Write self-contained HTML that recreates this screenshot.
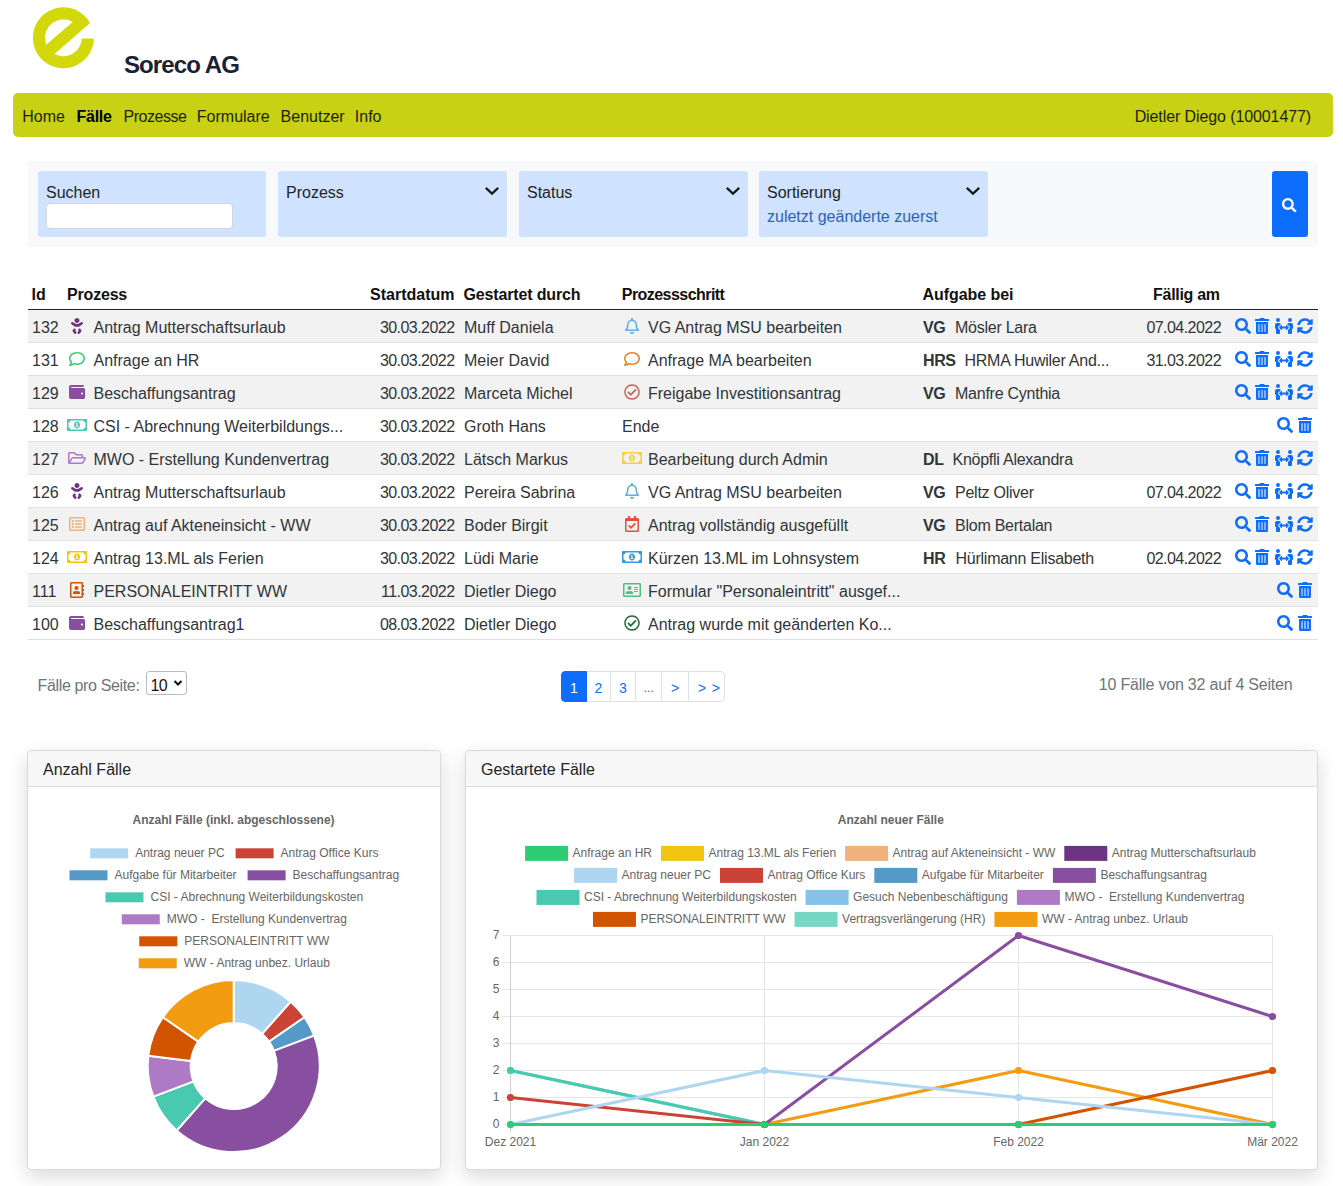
<!DOCTYPE html>
<html><head><meta charset="utf-8"><title>Fälle</title>
<style>
*{box-sizing:border-box;margin:0;padding:0}
html,body{width:1343px;height:1186px;overflow:hidden;background:#fff}
body{font-family:"Liberation Sans", sans-serif;font-size:16px;color:#212529;position:relative}
.a{position:absolute;white-space:nowrap}
.nav{left:13px;top:93px;width:1320px;height:44px;background:#c8d114;border-radius:5px}
.nl{position:absolute;top:2px;line-height:44px;font-size:16px;color:#1f1f00}
.filt{left:28px;top:161px;width:1290px;height:86px;background:#f8f9fa;border-radius:3px}
.fb{position:absolute;top:10px;height:66px;background:#cfe2ff;border-radius:3px}
.fl{position:absolute;left:8px;top:10px;line-height:24px;color:#212529}
.chev{position:absolute;top:14px;right:9px}
.th{font-weight:700;line-height:24px;color:#111}
.row{position:absolute;left:28px;width:1290px;height:33px;border-bottom:1px solid #dee2e6}
.row.s{background:#f2f2f2}
.c{position:absolute;top:6px;line-height:24px;white-space:nowrap;color:#30353a}
.ico{position:absolute}
.card{position:absolute;top:750px;height:420px;background:#fff;border:1px solid #dadada;border-radius:4px;box-shadow:0 7px 20px rgba(0,0,0,.15)}
.ch{height:36px;background:#f7f7f7;border-bottom:1px solid #dcdcdc;border-radius:4px 4px 0 0;line-height:37px;padding-left:15px;font-size:16px;color:#212529}
.pg{position:absolute;top:671px;height:31px;border:1px solid #dee2e6;line-height:32px;font-size:14px;color:#0d6efd;text-align:center;background:#fff}
</style></head><body>

<svg class="a" style="left:30px;top:4px" width="68" height="68" viewBox="0 0 68 68">
<path fill="#d3d80a" fill-rule="evenodd" d="M63.89 34.40A30.5 30.5 0 1 1 60.11 19.07L24.48 49.89A18.4 18.4 0 0 0 51.79 34.40Z M16.32 40.65A18.4 18.4 0 0 1 42.64 17.89Z"/>
</svg>
<div class="a" style="left:124px;top:49px;font-size:24px;font-weight:700;letter-spacing:-0.9px;line-height:32px;color:#1b2131">Soreco AG</div>
<div class="a nav">
<span class="nl" style="left:9.3px;">Home</span>
<span class="nl" style="left:63.599999999999994px;font-weight:700;color:#000;letter-spacing:-0.3px">Fälle</span>
<span class="nl" style="left:110.6px;letter-spacing:-0.5px">Prozesse</span>
<span class="nl" style="left:183.8px;">Formulare</span>
<span class="nl" style="left:267.6px;">Benutzer</span>
<span class="nl" style="left:341.8px;">Info</span>
<span class="nl" style="right:22px;letter-spacing:-0.1px">Dietler Diego (10001477)</span>
</div>
<div class="a filt">
<div class="fb" style="left:10px;width:228px"><div class="fl">Suchen</div><div style="position:absolute;left:8px;top:32px;width:187px;height:26px;background:#fff;border:1px solid #d3d6da;border-radius:4px"></div></div>
<div class="fb" style="left:250px;width:229px"><div class="fl">Prozess</div><div class="chev" style="top:14.6px;right:6.8px"><svg width="16" height="10" viewBox="0 0 16 10" style="display:block"><path d="M1.8 1.8 L8 7.6 L14.2 1.8" fill="none" stroke="#1a1d21" stroke-width="2.3"/></svg></div>
</div>
<div class="fb" style="left:491px;width:229px"><div class="fl">Status</div><div class="chev" style="top:14.6px;right:6.8px"><svg width="16" height="10" viewBox="0 0 16 10" style="display:block"><path d="M1.8 1.8 L8 7.6 L14.2 1.8" fill="none" stroke="#1a1d21" stroke-width="2.3"/></svg></div>
</div>
<div class="fb" style="left:731px;width:229px"><div class="fl">Sortierung</div><div class="chev" style="top:14.6px;right:6.8px"><svg width="16" height="10" viewBox="0 0 16 10" style="display:block"><path d="M1.8 1.8 L8 7.6 L14.2 1.8" fill="none" stroke="#1a1d21" stroke-width="2.3"/></svg></div>
<div class="fl" style="top:34px;color:#2d63b5">zuletzt geänderte zuerst</div>
</div>
<div class="fb" style="left:1244px;width:36px;background:#0d6efd"><div style="position:absolute;left:10.2px;top:26.5px"><svg width="14.50" height="14.5" viewBox="0 0 512 512" style="display:block"><path fill="#fff" d="M505 442.7L405.3 343c-4.5-4.5-10.6-7-17-7H372c27.6-35.3 44-79.7 44-128C416 93.1 322.9 0 208 0S0 93.1 0 208s93.1 208 208 208c48.3 0 92.7-16.4 128-44v16.3c0 6.4 2.5 12.5 7 17l99.7 99.7c9.4 9.4 24.6 9.4 33.9 0l28.3-28.3c9.4-9.4 9.4-24.6.1-34zM208 336c-70.7 0-128-57.2-128-128 0-70.7 57.2-128 128-128 70.7 0 128 57.2 128 128 0 70.7-57.2 128-128 128z"/></svg></div></div>
</div>
<div class="a th" style="left:31.5px;top:283px;letter-spacing:0px">Id</div>
<div class="a th" style="left:67.1px;top:283px;letter-spacing:-0.2px">Prozess</div>
<div class="a th" style="left:370.0px;top:283px;letter-spacing:0px">Startdatum</div>
<div class="a th" style="left:463.5px;top:283px;letter-spacing:-0.15px">Gestartet durch</div>
<div class="a th" style="left:621.8px;top:283px;letter-spacing:-0.55px">Prozessschritt</div>
<div class="a th" style="left:922.5px;top:283px;letter-spacing:-0.05px">Aufgabe bei</div>
<div class="a th" style="left:1153.1px;top:283px;letter-spacing:-0.3px">Fällig am</div>
<div class="a" style="left:28px;top:309px;width:1290px;height:1px;background:#212529"></div>
<div class="row s" style="top:310px">
<div class="c" style="left:4px">132</div>
<div class="ico" style="left:43.30px;top:8px"><svg width="12.00" height="16" viewBox="0 0 384 512" style="display:block"><path fill="#6c3483" d="M192 160c44.2 0 80-35.8 80-80S236.2 0 192 0s-80 35.8-80 80 35.8 80 80 80zm-53.4 248.8l25.6-32-61.5-51.2L56.8 383c-11.4 14.2-11.7 34.4-.8 49l48 64c7.9 10.5 19.9 16 32 16 8.3 0 16.8-2.6 24-8 17.7-13.2 21.2-38.3 8-56l-29.4-39.2zm142.7-83.2l-61.5 51.2 25.6 32L216 448c-13.2 17.700-9.7 42.8 8 56 7.2 5.4 15.6 8 24 8 12.2 0 24.2-5.5 32-16l48-64c10.9-14.6 10.6-34.8-.8-49l-45.9-57.4zM376.7 145c-12.7-18.1-37.6-22.4-55.700-9.8l-40.6 28.5c-52.7 37-124.2 37-176.8 0l-40.6-28.5C44.9 122.6 20 127 7.3 145c-12.7 18.1-8.3 43 9.8 55.7l40.6 28.5c15.6 10.9 32.4 19.3 49.7 25.3V264c0 8.8 7.2 16 16 16h137.2c8.8 0 16-7.2 16-16v-9.4c17.3-6 34.1-14.4 49.7-25.3l40.6-28.5c18.2-12.7 22.6-37.6 9.8-55.8z"/></svg></div>
<div class="c" style="left:65.5px">Antrag Mutterschaftsurlaub</div>
<div class="c" style="right:863.5px;letter-spacing:-0.55px">30.03.2022</div>
<div class="c" style="left:436px">Muff Daniela</div>
<div class="ico" style="left:597.20px;top:8px"><svg width="14.00" height="16" viewBox="0 0 448 512" style="display:block"><path fill="#5dade2" d="M439.39 362.29c-19.32-20.76-55.47-51.99-55.47-154.29 0-77.7-54.48-139.9-127.94-155.16V32c0-17.67-14.32-32-31.98-32s-31.98 14.33-31.98 32v20.84C118.56 68.1 64.08 130.3 64.08 208c0 102.3-36.15 133.53-55.47 154.29-6 6.45-8.66 14.16-8.61 21.71.11 16.4 12.98 32 32.1 32h383.8c19.12 0 32-15.6 32.1-32 .05-7.55-2.61-15.27-8.61-21.71zM67.53 368c21.22-27.97 44.42-74.33 44.53-159.42 0-.2-.06-.38-.06-.58 0-61.86 50.14-112 112-112s112 50.14 112 112c0 .2-.06.38-.06.58.11 85.1 23.31 131.46 44.530 159.42H67.53zM224 512c35.32 0 63.97-28.65 63.97-64H160.03c0 35.35 28.65 64 63.97 64z"/></svg></div>
<div class="c" style="left:620px">VG Antrag MSU bearbeiten</div>
<div class="c" style="left:895px;font-weight:700;letter-spacing:-0.4px">VG</div>
<div class="c" style="left:927px;letter-spacing:-0.25px">Mösler Lara</div>
<div class="c" style="right:97px;letter-spacing:-0.55px">07.04.2022</div>
<div class="ico" style="left:1206.5px;top:8px"><svg width="16.00" height="16" viewBox="0 0 512 512" style="display:block"><path fill="#0d6efd" d="M505 442.7L405.3 343c-4.5-4.5-10.6-7-17-7H372c27.6-35.3 44-79.7 44-128C416 93.1 322.9 0 208 0S0 93.1 0 208s93.1 208 208 208c48.3 0 92.7-16.4 128-44v16.3c0 6.4 2.5 12.5 7 17l99.7 99.7c9.4 9.4 24.6 9.4 33.9 0l28.3-28.3c9.4-9.4 9.4-24.6.1-34zM208 336c-70.7 0-128-57.2-128-128 0-70.7 57.2-128 128-128 70.7 0 128 57.2 128 128 0 70.7-57.2 128-128 128z"/></svg></div>
<div class="ico" style="left:1226.8px;top:8px"><svg width="14.00" height="16" viewBox="0 0 448 512" style="display:block"><path fill="#0d6efd" d="M32 464a48 48 0 0 0 48 48h288a48 48 0 0 0 48-48V128H32zm272-256a16 16 0 0 1 32 0v224a16 16 0 0 1-32 0zm-96 0a16 16 0 0 1 32 0v224a16 16 0 0 1-32 0zm-96 0a16 16 0 0 1 32 0v224a16 16 0 0 1-32 0zM432 32H312l-9.4-18.7A24 24 0 0 0 281.1 0H166.8a23.72 23.72 0 0 0-21.4 13.3L136 32H16A16 16 0 0 0 0 48v32a16 16 0 0 0 16 16h416a16 16 0 0 0 16-16V48a16 16 0 0 0-16-16z"/></svg></div>
<div class="ico" style="left:1247.2px;top:8px"><svg width="18.00" height="16" viewBox="0 0 576 512" style="display:block"><path fill="#0d6efd" d="M96,128A64,64,0,1,0,32,64,64,64,0,0,0,96,128Zm0,176.08a44.11,44.11,0,0,1,13.64-32L181.77,204c1.65-1.55,3.77-2.31,5.61-3.57A63.91,63.91,0,0,0,128,160H64A64,64,0,0,0,0,224v96a32,32,0,0,0,32,32V480a32,32,0,0,0,32,32h64a32,32,0,0,0,32-32V383.61l-50.36-47.53A44.08,44.08,0,0,1,96,304.08ZM480,128a64,64,0,1,0-64-64A64,64,0,0,0,480,128Zm32,32H448a63.91,63.91,0,0,0-59.38,40.42c1.84,1.27,4,2,5.62,3.59l72.12,68.06a44.37,44.37,0,0,1,0,64L416,383.62V480a32,32,0,0,0,32,32h64a32,32,0,0,0,32-32V352a32,32,0,0,0,32-32V224A64,64,0,0,0,512,160ZM444.4,295.34l-72.12-68.06A12,12,0,0,0,352,236v36H224V236a12,12,0,0,0-20.28-8.73L131.6,295.34a12.4,12.4,0,0,0,0,17.47l72.12,68.07A12,12,0,0,0,224,372V336H352v36a12,12,0,0,0,20.28,8.72l72.12-68.07A12.4,12.4,0,0,0,444.4,295.34Z"/></svg></div>
<div class="ico" style="left:1269px;top:8px"><svg width="16.00" height="16" viewBox="0 0 512 512" style="display:block"><path fill="#0d6efd" d="M370.72 133.28C339.458 104.008 298.888 87.962 255.848 88c-77.458.068-144.328 53.178-162.791 126.85-1.344 5.363-6.122 9.15-11.651 9.15H24.103c-7.498 0-13.194-6.807-11.807-14.176C33.933 94.924 134.813 8 256 8c66.448 0 126.791 26.136 171.315 68.685L463.03 40.97C478.149 25.851 504 36.559 504 57.941V192c0 13.255-10.745 24-24 24H345.941c-21.382 0-32.090-25.851-16.971-40.971l41.75-41.749zM32 296h134.059c21.382 0 32.09 25.851 16.971 40.971l-41.75 41.75c31.262 29.273 71.835 45.319 114.876 45.28 77.418-.07 144.315-53.144 162.787-126.849 1.344-5.363 6.122-9.15 11.651-9.150h57.304c7.498 0 13.194 6.807 11.807 14.176C478.067 417.076 377.187 504 256 504c-66.448 0-126.791-26.136-171.315-68.685L48.97 471.03C33.851 486.149 8 475.441 8 454.059V320c0-13.255 10.745-24 24-24z"/></svg></div>
</div>
<div class="row" style="top:343px">
<div class="c" style="left:4px">131</div>
<div class="ico" style="left:41.30px;top:8px"><svg width="16.00" height="16" viewBox="0 0 512 512" style="display:block"><path fill="#2ecc71" d="M256 32C114.6 32 0 125.1 0 240c0 47.6 19.9 91.2 52.9 126.3C38 405.7 7 439.1 6.5 439.5c-6.6 7-8.4 17.2-4.6 26S14.4 480 24 480c61.5 0 110-25.7 139.1-46.3C192 442.8 223.2 448 256 448c141.4 0 256-93.1 256-208S397.4 32 256 32zm0 368c-26.7 0-53.1-4.1-78.4-12.1l-22.7-7.2-19.5 13.8c-14.3 10.1-33.9 21.4-57.5 29 7.3-12.1 14.4-25.7 19.9-40.2l10.6-28.1-20.6-21.8C69.7 314.1 48 282.2 48 240c0-88.2 93.3-160 208-160s208 71.8 208 160-93.3 160-208 160z"/></svg></div>
<div class="c" style="left:65.5px">Anfrage an HR</div>
<div class="c" style="right:863.5px;letter-spacing:-0.55px">30.03.2022</div>
<div class="c" style="left:436px">Meier David</div>
<div class="ico" style="left:596.20px;top:8px"><svg width="16.00" height="16" viewBox="0 0 512 512" style="display:block"><path fill="#e67e22" d="M256 32C114.6 32 0 125.1 0 240c0 47.6 19.9 91.2 52.9 126.3C38 405.7 7 439.1 6.5 439.5c-6.6 7-8.4 17.2-4.6 26S14.4 480 24 480c61.5 0 110-25.7 139.1-46.3C192 442.8 223.2 448 256 448c141.4 0 256-93.1 256-208S397.4 32 256 32zm0 368c-26.7 0-53.1-4.1-78.4-12.1l-22.7-7.2-19.5 13.8c-14.3 10.1-33.9 21.4-57.5 29 7.3-12.1 14.4-25.7 19.9-40.2l10.6-28.1-20.6-21.8C69.7 314.1 48 282.2 48 240c0-88.2 93.3-160 208-160s208 71.8 208 160-93.3 160-208 160z"/></svg></div>
<div class="c" style="left:620px">Anfrage MA bearbeiten</div>
<div class="c" style="left:895px;font-weight:700;letter-spacing:-0.4px">HRS</div>
<div class="c" style="left:936.5px;letter-spacing:-0.25px">HRMA Huwiler And...</div>
<div class="c" style="right:97px;letter-spacing:-0.55px">31.03.2022</div>
<div class="ico" style="left:1206.5px;top:8px"><svg width="16.00" height="16" viewBox="0 0 512 512" style="display:block"><path fill="#0d6efd" d="M505 442.7L405.3 343c-4.5-4.5-10.6-7-17-7H372c27.6-35.3 44-79.7 44-128C416 93.1 322.9 0 208 0S0 93.1 0 208s93.1 208 208 208c48.3 0 92.7-16.4 128-44v16.3c0 6.4 2.5 12.5 7 17l99.7 99.7c9.4 9.4 24.6 9.4 33.9 0l28.3-28.3c9.4-9.4 9.4-24.6.1-34zM208 336c-70.7 0-128-57.2-128-128 0-70.7 57.2-128 128-128 70.7 0 128 57.2 128 128 0 70.7-57.2 128-128 128z"/></svg></div>
<div class="ico" style="left:1226.8px;top:8px"><svg width="14.00" height="16" viewBox="0 0 448 512" style="display:block"><path fill="#0d6efd" d="M32 464a48 48 0 0 0 48 48h288a48 48 0 0 0 48-48V128H32zm272-256a16 16 0 0 1 32 0v224a16 16 0 0 1-32 0zm-96 0a16 16 0 0 1 32 0v224a16 16 0 0 1-32 0zm-96 0a16 16 0 0 1 32 0v224a16 16 0 0 1-32 0zM432 32H312l-9.4-18.7A24 24 0 0 0 281.1 0H166.8a23.72 23.72 0 0 0-21.4 13.3L136 32H16A16 16 0 0 0 0 48v32a16 16 0 0 0 16 16h416a16 16 0 0 0 16-16V48a16 16 0 0 0-16-16z"/></svg></div>
<div class="ico" style="left:1247.2px;top:8px"><svg width="18.00" height="16" viewBox="0 0 576 512" style="display:block"><path fill="#0d6efd" d="M96,128A64,64,0,1,0,32,64,64,64,0,0,0,96,128Zm0,176.08a44.11,44.11,0,0,1,13.64-32L181.77,204c1.65-1.55,3.77-2.31,5.61-3.57A63.91,63.91,0,0,0,128,160H64A64,64,0,0,0,0,224v96a32,32,0,0,0,32,32V480a32,32,0,0,0,32,32h64a32,32,0,0,0,32-32V383.61l-50.36-47.53A44.08,44.08,0,0,1,96,304.08ZM480,128a64,64,0,1,0-64-64A64,64,0,0,0,480,128Zm32,32H448a63.91,63.91,0,0,0-59.38,40.42c1.84,1.27,4,2,5.62,3.59l72.12,68.06a44.37,44.37,0,0,1,0,64L416,383.62V480a32,32,0,0,0,32,32h64a32,32,0,0,0,32-32V352a32,32,0,0,0,32-32V224A64,64,0,0,0,512,160ZM444.4,295.34l-72.12-68.06A12,12,0,0,0,352,236v36H224V236a12,12,0,0,0-20.28-8.73L131.6,295.34a12.4,12.4,0,0,0,0,17.47l72.12,68.07A12,12,0,0,0,224,372V336H352v36a12,12,0,0,0,20.28,8.72l72.12-68.07A12.4,12.4,0,0,0,444.4,295.34Z"/></svg></div>
<div class="ico" style="left:1269px;top:8px"><svg width="16.00" height="16" viewBox="0 0 512 512" style="display:block"><path fill="#0d6efd" d="M370.72 133.28C339.458 104.008 298.888 87.962 255.848 88c-77.458.068-144.328 53.178-162.791 126.85-1.344 5.363-6.122 9.15-11.651 9.15H24.103c-7.498 0-13.194-6.807-11.807-14.176C33.933 94.924 134.813 8 256 8c66.448 0 126.791 26.136 171.315 68.685L463.03 40.97C478.149 25.851 504 36.559 504 57.941V192c0 13.255-10.745 24-24 24H345.941c-21.382 0-32.090-25.851-16.971-40.971l41.75-41.749zM32 296h134.059c21.382 0 32.09 25.851 16.971 40.971l-41.75 41.75c31.262 29.273 71.835 45.319 114.876 45.28 77.418-.07 144.315-53.144 162.787-126.849 1.344-5.363 6.122-9.15 11.651-9.150h57.304c7.498 0 13.194 6.807 11.807 14.176C478.067 417.076 377.187 504 256 504c-66.448 0-126.791-26.136-171.315-68.685L48.97 471.03C33.851 486.149 8 475.441 8 454.059V320c0-13.255 10.745-24 24-24z"/></svg></div>
</div>
<div class="row s" style="top:376px">
<div class="c" style="left:4px">129</div>
<div class="ico" style="left:41.30px;top:8px"><svg width="16.00" height="16" viewBox="0 0 512 512" style="display:block"><path fill="#884ea0" d="M461.2 128H80c-8.84 0-16-7.16-16-16s7.16-16 16-16h384c8.84 0 16-7.16 16-16 0-26.51-21.49-48-48-48H64C28.65 32 0 60.65 0 96v320c0 35.35 28.65 64 64 64h397.2c28.020 0 50.8-21.53 50.8-48V176c0-26.47-22.78-48-50.8-48zM416 336c-17.67 0-32-14.33-32-32s14.33-32 32-32 32 14.33 32 32-14.33 32-32 32z"/></svg></div>
<div class="c" style="left:65.5px">Beschaffungsantrag</div>
<div class="c" style="right:863.5px;letter-spacing:-0.55px">30.03.2022</div>
<div class="c" style="left:436px">Marceta Michel</div>
<div class="ico" style="left:596.20px;top:8px"><svg width="16.00" height="16" viewBox="0 0 512 512" style="display:block"><path fill="#cd6155" d="M256 8C119.033 8 8 119.033 8 256s111.033 248 248 248 248-111.033 248-248S392.967 8 256 8zm0 48c110.532 0 200 89.451 200 200 0 110.532-89.451 200-200 200-110.532 0-200-89.451-200-200 0-110.532 89.451-200 200-200m140.204 130.267l-22.536-22.718c-4.667-4.705-12.265-4.736-16.970-.068L215.346 303.697l-59.792-60.277c-4.667-4.705-12.265-4.736-16.97-.069l-22.719 22.536c-4.705 4.667-4.736 12.265-.068 16.971l90.781 91.516c4.667 4.705 12.265 4.736 16.97.068l172.589-171.204c4.704-4.668 4.734-12.266.067-16.971z"/></svg></div>
<div class="c" style="left:620px">Freigabe Investitionsantrag</div>
<div class="c" style="left:895px;font-weight:700;letter-spacing:-0.4px">VG</div>
<div class="c" style="left:927px;letter-spacing:-0.25px">Manfre Cynthia</div>
<div class="ico" style="left:1206.5px;top:8px"><svg width="16.00" height="16" viewBox="0 0 512 512" style="display:block"><path fill="#0d6efd" d="M505 442.7L405.3 343c-4.5-4.5-10.6-7-17-7H372c27.6-35.3 44-79.7 44-128C416 93.1 322.9 0 208 0S0 93.1 0 208s93.1 208 208 208c48.3 0 92.7-16.4 128-44v16.3c0 6.4 2.5 12.5 7 17l99.7 99.7c9.4 9.4 24.6 9.4 33.9 0l28.3-28.3c9.4-9.4 9.4-24.6.1-34zM208 336c-70.7 0-128-57.2-128-128 0-70.7 57.2-128 128-128 70.7 0 128 57.2 128 128 0 70.7-57.2 128-128 128z"/></svg></div>
<div class="ico" style="left:1226.8px;top:8px"><svg width="14.00" height="16" viewBox="0 0 448 512" style="display:block"><path fill="#0d6efd" d="M32 464a48 48 0 0 0 48 48h288a48 48 0 0 0 48-48V128H32zm272-256a16 16 0 0 1 32 0v224a16 16 0 0 1-32 0zm-96 0a16 16 0 0 1 32 0v224a16 16 0 0 1-32 0zm-96 0a16 16 0 0 1 32 0v224a16 16 0 0 1-32 0zM432 32H312l-9.4-18.7A24 24 0 0 0 281.1 0H166.8a23.72 23.72 0 0 0-21.4 13.3L136 32H16A16 16 0 0 0 0 48v32a16 16 0 0 0 16 16h416a16 16 0 0 0 16-16V48a16 16 0 0 0-16-16z"/></svg></div>
<div class="ico" style="left:1247.2px;top:8px"><svg width="18.00" height="16" viewBox="0 0 576 512" style="display:block"><path fill="#0d6efd" d="M96,128A64,64,0,1,0,32,64,64,64,0,0,0,96,128Zm0,176.08a44.11,44.11,0,0,1,13.64-32L181.77,204c1.65-1.55,3.77-2.31,5.61-3.57A63.91,63.91,0,0,0,128,160H64A64,64,0,0,0,0,224v96a32,32,0,0,0,32,32V480a32,32,0,0,0,32,32h64a32,32,0,0,0,32-32V383.61l-50.36-47.53A44.08,44.08,0,0,1,96,304.08ZM480,128a64,64,0,1,0-64-64A64,64,0,0,0,480,128Zm32,32H448a63.91,63.91,0,0,0-59.38,40.42c1.84,1.27,4,2,5.62,3.59l72.12,68.06a44.37,44.37,0,0,1,0,64L416,383.62V480a32,32,0,0,0,32,32h64a32,32,0,0,0,32-32V352a32,32,0,0,0,32-32V224A64,64,0,0,0,512,160ZM444.4,295.34l-72.12-68.06A12,12,0,0,0,352,236v36H224V236a12,12,0,0,0-20.28-8.73L131.6,295.34a12.4,12.4,0,0,0,0,17.47l72.12,68.07A12,12,0,0,0,224,372V336H352v36a12,12,0,0,0,20.28,8.72l72.12-68.07A12.4,12.4,0,0,0,444.4,295.34Z"/></svg></div>
<div class="ico" style="left:1269px;top:8px"><svg width="16.00" height="16" viewBox="0 0 512 512" style="display:block"><path fill="#0d6efd" d="M370.72 133.28C339.458 104.008 298.888 87.962 255.848 88c-77.458.068-144.328 53.178-162.791 126.85-1.344 5.363-6.122 9.15-11.651 9.15H24.103c-7.498 0-13.194-6.807-11.807-14.176C33.933 94.924 134.813 8 256 8c66.448 0 126.791 26.136 171.315 68.685L463.03 40.97C478.149 25.851 504 36.559 504 57.941V192c0 13.255-10.745 24-24 24H345.941c-21.382 0-32.090-25.851-16.971-40.971l41.75-41.749zM32 296h134.059c21.382 0 32.09 25.851 16.971 40.971l-41.75 41.75c31.262 29.273 71.835 45.319 114.876 45.28 77.418-.07 144.315-53.144 162.787-126.849 1.344-5.363 6.122-9.15 11.651-9.150h57.304c7.498 0 13.194 6.807 11.807 14.176C478.067 417.076 377.187 504 256 504c-66.448 0-126.791-26.136-171.315-68.685L48.97 471.03C33.851 486.149 8 475.441 8 454.059V320c0-13.255 10.745-24 24-24z"/></svg></div>
</div>
<div class="row" style="top:409px">
<div class="c" style="left:4px">128</div>
<div class="ico" style="left:39.30px;top:8px"><svg width="20.00" height="16" viewBox="0 0 640 512" style="display:block"><path fill="#48c9b0" d="M320 144c-53.02 0-96 50.14-96 112 0 61.85 42.98 112 96 112 53 0 96-50.13 96-112 0-61.86-42.98-112-96-112zm40 168c0 4.42-3.58 8-8 8h-64c-4.42 0-8-3.58-8-8v-16c0-4.42 3.58-8 8-8h16v-55.44l-.47.31a7.992 7.992 0 0 1-11.09-2.22l-8.88-13.31a7.992 7.992 0 0 1 2.22-11.09l15.33-10.22a23.99 23.99 0 0 1 13.31-4.030H328c4.42 0 8 3.58 8 8v88h16c4.42 0 8 3.58 8 8v16zM608 64H32C14.33 64 0 78.33 0 96v320c0 17.67 14.33 32 32 32h576c17.67 0 32-14.33 32-32V96c0-17.67-14.33-32-32-32zm-16 272c-35.35 0-64 28.65-64 64H112c0-35.35-28.65-64-64-64V176c35.35 0 64-28.65 64-64h416c0 35.35 28.65 64 64 64v160z"/></svg></div>
<div class="c" style="left:65.5px">CSI - Abrechnung Weiterbildungs...</div>
<div class="c" style="right:863.5px;letter-spacing:-0.55px">30.03.2022</div>
<div class="c" style="left:436px">Groth Hans</div>
<div class="c" style="left:594px">Ende</div>
<div class="ico" style="left:1249.2px;top:8px"><svg width="16.00" height="16" viewBox="0 0 512 512" style="display:block"><path fill="#0d6efd" d="M505 442.7L405.3 343c-4.5-4.5-10.6-7-17-7H372c27.6-35.3 44-79.7 44-128C416 93.1 322.9 0 208 0S0 93.1 0 208s93.1 208 208 208c48.3 0 92.7-16.4 128-44v16.3c0 6.4 2.5 12.5 7 17l99.7 99.7c9.4 9.4 24.6 9.4 33.9 0l28.3-28.3c9.4-9.4 9.4-24.6.1-34zM208 336c-70.7 0-128-57.2-128-128 0-70.7 57.2-128 128-128 70.7 0 128 57.2 128 128 0 70.7-57.2 128-128 128z"/></svg></div>
<div class="ico" style="left:1269.8px;top:8px"><svg width="14.00" height="16" viewBox="0 0 448 512" style="display:block"><path fill="#0d6efd" d="M32 464a48 48 0 0 0 48 48h288a48 48 0 0 0 48-48V128H32zm272-256a16 16 0 0 1 32 0v224a16 16 0 0 1-32 0zm-96 0a16 16 0 0 1 32 0v224a16 16 0 0 1-32 0zm-96 0a16 16 0 0 1 32 0v224a16 16 0 0 1-32 0zM432 32H312l-9.4-18.7A24 24 0 0 0 281.1 0H166.8a23.72 23.72 0 0 0-21.4 13.3L136 32H16A16 16 0 0 0 0 48v32a16 16 0 0 0 16 16h416a16 16 0 0 0 16-16V48a16 16 0 0 0-16-16z"/></svg></div>
</div>
<div class="row s" style="top:442px">
<div class="c" style="left:4px">127</div>
<div class="ico" style="left:40.30px;top:8px"><svg width="18.00" height="16" viewBox="0 0 576 512" style="display:block"><path fill="#af7ac5" d="M527.9 224H480v-48c0-26.5-21.5-48-48-48H272l-64-64H48C21.5 64 0 85.5 0 112v288c0 26.5 21.5 48 48 48h400c16.5 0 31.9-8.5 40.7-22.6l79.9-128c20-31.9-3-73.4-40.7-73.4zM48 118c0-3.3 2.7-6 6-6h134.1l64 64H426c3.3 0 6 2.7 6 6v42H152c-16.8 0-32.4 8.8-41.1 23.2L48 351.4zm400 282H72l77.2-128H528z"/></svg></div>
<div class="c" style="left:65.5px">MWO - Erstellung Kundenvertrag</div>
<div class="c" style="right:863.5px;letter-spacing:-0.55px">30.03.2022</div>
<div class="c" style="left:436px">Lätsch Markus</div>
<div class="ico" style="left:594.20px;top:8px"><svg width="20.00" height="16" viewBox="0 0 640 512" style="display:block"><path fill="#f4d03f" d="M320 144c-53.02 0-96 50.14-96 112 0 61.85 42.98 112 96 112 53 0 96-50.13 96-112 0-61.86-42.98-112-96-112zm40 168c0 4.42-3.58 8-8 8h-64c-4.42 0-8-3.58-8-8v-16c0-4.42 3.58-8 8-8h16v-55.44l-.47.31a7.992 7.992 0 0 1-11.09-2.22l-8.88-13.31a7.992 7.992 0 0 1 2.22-11.09l15.33-10.22a23.99 23.99 0 0 1 13.31-4.030H328c4.42 0 8 3.58 8 8v88h16c4.42 0 8 3.58 8 8v16zM608 64H32C14.33 64 0 78.33 0 96v320c0 17.67 14.33 32 32 32h576c17.67 0 32-14.33 32-32V96c0-17.67-14.33-32-32-32zm-16 272c-35.35 0-64 28.65-64 64H112c0-35.35-28.65-64-64-64V176c35.35 0 64-28.65 64-64h416c0 35.35 28.65 64 64 64v160z"/></svg></div>
<div class="c" style="left:620px">Bearbeitung durch Admin</div>
<div class="c" style="left:895px;font-weight:700;letter-spacing:-0.4px">DL</div>
<div class="c" style="left:924.5px;letter-spacing:-0.25px">Knöpfli Alexandra</div>
<div class="ico" style="left:1206.5px;top:8px"><svg width="16.00" height="16" viewBox="0 0 512 512" style="display:block"><path fill="#0d6efd" d="M505 442.7L405.3 343c-4.5-4.5-10.6-7-17-7H372c27.6-35.3 44-79.7 44-128C416 93.1 322.9 0 208 0S0 93.1 0 208s93.1 208 208 208c48.3 0 92.7-16.4 128-44v16.3c0 6.4 2.5 12.5 7 17l99.7 99.7c9.4 9.4 24.6 9.4 33.9 0l28.3-28.3c9.4-9.4 9.4-24.6.1-34zM208 336c-70.7 0-128-57.2-128-128 0-70.7 57.2-128 128-128 70.7 0 128 57.2 128 128 0 70.7-57.2 128-128 128z"/></svg></div>
<div class="ico" style="left:1226.8px;top:8px"><svg width="14.00" height="16" viewBox="0 0 448 512" style="display:block"><path fill="#0d6efd" d="M32 464a48 48 0 0 0 48 48h288a48 48 0 0 0 48-48V128H32zm272-256a16 16 0 0 1 32 0v224a16 16 0 0 1-32 0zm-96 0a16 16 0 0 1 32 0v224a16 16 0 0 1-32 0zm-96 0a16 16 0 0 1 32 0v224a16 16 0 0 1-32 0zM432 32H312l-9.4-18.7A24 24 0 0 0 281.1 0H166.8a23.72 23.72 0 0 0-21.4 13.3L136 32H16A16 16 0 0 0 0 48v32a16 16 0 0 0 16 16h416a16 16 0 0 0 16-16V48a16 16 0 0 0-16-16z"/></svg></div>
<div class="ico" style="left:1247.2px;top:8px"><svg width="18.00" height="16" viewBox="0 0 576 512" style="display:block"><path fill="#0d6efd" d="M96,128A64,64,0,1,0,32,64,64,64,0,0,0,96,128Zm0,176.08a44.11,44.11,0,0,1,13.64-32L181.77,204c1.65-1.55,3.77-2.31,5.61-3.57A63.91,63.91,0,0,0,128,160H64A64,64,0,0,0,0,224v96a32,32,0,0,0,32,32V480a32,32,0,0,0,32,32h64a32,32,0,0,0,32-32V383.61l-50.36-47.53A44.08,44.08,0,0,1,96,304.08ZM480,128a64,64,0,1,0-64-64A64,64,0,0,0,480,128Zm32,32H448a63.91,63.91,0,0,0-59.38,40.42c1.84,1.27,4,2,5.62,3.59l72.12,68.06a44.37,44.37,0,0,1,0,64L416,383.62V480a32,32,0,0,0,32,32h64a32,32,0,0,0,32-32V352a32,32,0,0,0,32-32V224A64,64,0,0,0,512,160ZM444.4,295.34l-72.12-68.06A12,12,0,0,0,352,236v36H224V236a12,12,0,0,0-20.28-8.73L131.6,295.34a12.4,12.4,0,0,0,0,17.47l72.12,68.07A12,12,0,0,0,224,372V336H352v36a12,12,0,0,0,20.28,8.72l72.12-68.07A12.4,12.4,0,0,0,444.4,295.34Z"/></svg></div>
<div class="ico" style="left:1269px;top:8px"><svg width="16.00" height="16" viewBox="0 0 512 512" style="display:block"><path fill="#0d6efd" d="M370.72 133.28C339.458 104.008 298.888 87.962 255.848 88c-77.458.068-144.328 53.178-162.791 126.85-1.344 5.363-6.122 9.15-11.651 9.15H24.103c-7.498 0-13.194-6.807-11.807-14.176C33.933 94.924 134.813 8 256 8c66.448 0 126.791 26.136 171.315 68.685L463.03 40.97C478.149 25.851 504 36.559 504 57.941V192c0 13.255-10.745 24-24 24H345.941c-21.382 0-32.090-25.851-16.971-40.971l41.75-41.749zM32 296h134.059c21.382 0 32.09 25.851 16.971 40.971l-41.75 41.75c31.262 29.273 71.835 45.319 114.876 45.28 77.418-.07 144.315-53.144 162.787-126.849 1.344-5.363 6.122-9.15 11.651-9.150h57.304c7.498 0 13.194 6.807 11.807 14.176C478.067 417.076 377.187 504 256 504c-66.448 0-126.791-26.136-171.315-68.685L48.97 471.03C33.851 486.149 8 475.441 8 454.059V320c0-13.255 10.745-24 24-24z"/></svg></div>
</div>
<div class="row" style="top:475px">
<div class="c" style="left:4px">126</div>
<div class="ico" style="left:43.30px;top:8px"><svg width="12.00" height="16" viewBox="0 0 384 512" style="display:block"><path fill="#6c3483" d="M192 160c44.2 0 80-35.8 80-80S236.2 0 192 0s-80 35.8-80 80 35.8 80 80 80zm-53.4 248.8l25.6-32-61.5-51.2L56.8 383c-11.4 14.2-11.7 34.4-.8 49l48 64c7.9 10.5 19.9 16 32 16 8.3 0 16.8-2.6 24-8 17.7-13.2 21.2-38.3 8-56l-29.4-39.2zm142.7-83.2l-61.5 51.2 25.6 32L216 448c-13.2 17.700-9.7 42.8 8 56 7.2 5.4 15.6 8 24 8 12.2 0 24.2-5.5 32-16l48-64c10.9-14.6 10.6-34.8-.8-49l-45.9-57.4zM376.7 145c-12.7-18.1-37.6-22.4-55.700-9.8l-40.6 28.5c-52.7 37-124.2 37-176.8 0l-40.6-28.5C44.9 122.6 20 127 7.3 145c-12.7 18.1-8.3 43 9.8 55.7l40.6 28.5c15.6 10.9 32.4 19.3 49.7 25.3V264c0 8.8 7.2 16 16 16h137.2c8.8 0 16-7.2 16-16v-9.4c17.3-6 34.1-14.4 49.7-25.3l40.6-28.5c18.2-12.7 22.6-37.6 9.8-55.8z"/></svg></div>
<div class="c" style="left:65.5px">Antrag Mutterschaftsurlaub</div>
<div class="c" style="right:863.5px;letter-spacing:-0.55px">30.03.2022</div>
<div class="c" style="left:436px">Pereira Sabrina</div>
<div class="ico" style="left:597.20px;top:8px"><svg width="14.00" height="16" viewBox="0 0 448 512" style="display:block"><path fill="#5dade2" d="M439.39 362.29c-19.32-20.76-55.47-51.99-55.47-154.29 0-77.7-54.48-139.9-127.94-155.16V32c0-17.67-14.32-32-31.98-32s-31.98 14.33-31.98 32v20.84C118.56 68.1 64.08 130.3 64.08 208c0 102.3-36.15 133.53-55.47 154.29-6 6.45-8.66 14.16-8.61 21.71.11 16.4 12.98 32 32.1 32h383.8c19.12 0 32-15.6 32.1-32 .05-7.55-2.61-15.27-8.61-21.71zM67.53 368c21.22-27.97 44.42-74.33 44.53-159.42 0-.2-.06-.38-.06-.58 0-61.86 50.14-112 112-112s112 50.14 112 112c0 .2-.06.38-.06.58.11 85.1 23.31 131.46 44.530 159.42H67.53zM224 512c35.32 0 63.97-28.65 63.97-64H160.03c0 35.35 28.65 64 63.97 64z"/></svg></div>
<div class="c" style="left:620px">VG Antrag MSU bearbeiten</div>
<div class="c" style="left:895px;font-weight:700;letter-spacing:-0.4px">VG</div>
<div class="c" style="left:927px;letter-spacing:-0.25px">Peltz Oliver</div>
<div class="c" style="right:97px;letter-spacing:-0.55px">07.04.2022</div>
<div class="ico" style="left:1206.5px;top:8px"><svg width="16.00" height="16" viewBox="0 0 512 512" style="display:block"><path fill="#0d6efd" d="M505 442.7L405.3 343c-4.5-4.5-10.6-7-17-7H372c27.6-35.3 44-79.7 44-128C416 93.1 322.9 0 208 0S0 93.1 0 208s93.1 208 208 208c48.3 0 92.7-16.4 128-44v16.3c0 6.4 2.5 12.5 7 17l99.7 99.7c9.4 9.4 24.6 9.4 33.9 0l28.3-28.3c9.4-9.4 9.4-24.6.1-34zM208 336c-70.7 0-128-57.2-128-128 0-70.7 57.2-128 128-128 70.7 0 128 57.2 128 128 0 70.7-57.2 128-128 128z"/></svg></div>
<div class="ico" style="left:1226.8px;top:8px"><svg width="14.00" height="16" viewBox="0 0 448 512" style="display:block"><path fill="#0d6efd" d="M32 464a48 48 0 0 0 48 48h288a48 48 0 0 0 48-48V128H32zm272-256a16 16 0 0 1 32 0v224a16 16 0 0 1-32 0zm-96 0a16 16 0 0 1 32 0v224a16 16 0 0 1-32 0zm-96 0a16 16 0 0 1 32 0v224a16 16 0 0 1-32 0zM432 32H312l-9.4-18.7A24 24 0 0 0 281.1 0H166.8a23.72 23.72 0 0 0-21.4 13.3L136 32H16A16 16 0 0 0 0 48v32a16 16 0 0 0 16 16h416a16 16 0 0 0 16-16V48a16 16 0 0 0-16-16z"/></svg></div>
<div class="ico" style="left:1247.2px;top:8px"><svg width="18.00" height="16" viewBox="0 0 576 512" style="display:block"><path fill="#0d6efd" d="M96,128A64,64,0,1,0,32,64,64,64,0,0,0,96,128Zm0,176.08a44.11,44.11,0,0,1,13.64-32L181.77,204c1.65-1.55,3.77-2.31,5.61-3.57A63.91,63.91,0,0,0,128,160H64A64,64,0,0,0,0,224v96a32,32,0,0,0,32,32V480a32,32,0,0,0,32,32h64a32,32,0,0,0,32-32V383.61l-50.36-47.53A44.08,44.08,0,0,1,96,304.08ZM480,128a64,64,0,1,0-64-64A64,64,0,0,0,480,128Zm32,32H448a63.91,63.91,0,0,0-59.38,40.42c1.84,1.27,4,2,5.62,3.59l72.12,68.06a44.37,44.37,0,0,1,0,64L416,383.62V480a32,32,0,0,0,32,32h64a32,32,0,0,0,32-32V352a32,32,0,0,0,32-32V224A64,64,0,0,0,512,160ZM444.4,295.34l-72.12-68.06A12,12,0,0,0,352,236v36H224V236a12,12,0,0,0-20.28-8.73L131.6,295.34a12.4,12.4,0,0,0,0,17.47l72.12,68.07A12,12,0,0,0,224,372V336H352v36a12,12,0,0,0,20.28,8.72l72.12-68.07A12.4,12.4,0,0,0,444.4,295.34Z"/></svg></div>
<div class="ico" style="left:1269px;top:8px"><svg width="16.00" height="16" viewBox="0 0 512 512" style="display:block"><path fill="#0d6efd" d="M370.72 133.28C339.458 104.008 298.888 87.962 255.848 88c-77.458.068-144.328 53.178-162.791 126.85-1.344 5.363-6.122 9.15-11.651 9.15H24.103c-7.498 0-13.194-6.807-11.807-14.176C33.933 94.924 134.813 8 256 8c66.448 0 126.791 26.136 171.315 68.685L463.03 40.97C478.149 25.851 504 36.559 504 57.941V192c0 13.255-10.745 24-24 24H345.941c-21.382 0-32.090-25.851-16.971-40.971l41.75-41.749zM32 296h134.059c21.382 0 32.09 25.851 16.971 40.971l-41.75 41.75c31.262 29.273 71.835 45.319 114.876 45.28 77.418-.07 144.315-53.144 162.787-126.849 1.344-5.363 6.122-9.15 11.651-9.150h57.304c7.498 0 13.194 6.807 11.807 14.176C478.067 417.076 377.187 504 256 504c-66.448 0-126.791-26.136-171.315-68.685L48.97 471.03C33.851 486.149 8 475.441 8 454.059V320c0-13.255 10.745-24 24-24z"/></svg></div>
</div>
<div class="row s" style="top:508px">
<div class="c" style="left:4px">125</div>
<div class="ico" style="left:41.30px;top:8px"><svg width="16.00" height="16" viewBox="0 0 512 512" style="display:block"><path fill="#f0b27a" d="M464 32H48C21.49 32 0 53.49 0 80v352c0 26.51 21.49 48 48 48h416c26.51 0 48-21.49 48-48V80c0-26.51-21.49-48-48-48zm-6 400H54a6 6 0 0 1-6-6V86a6 6 0 0 1 6-6h404a6 6 0 0 1 6 6v340a6 6 0 0 1-6 6zm-42-92v24c0 6.627-5.373 12-12 12H204c-6.627 0-12-5.373-12-12v-24c0-6.627 5.373-12 12-12h200c6.627 0 12 5.373 12 12zm0-96v24c0 6.627-5.373 12-12 12H204c-6.627 0-12-5.373-12-12v-24c0-6.627 5.373-12 12-12h200c6.627 0 12 5.373 12 12zm0-96v24c0 6.627-5.373 12-12 12H204c-6.627 0-12-5.373-12-12v-24c0-6.627 5.373-12 12-12h200c6.627 0 12 5.373 12 12zm-252 12c0 19.882-16.118 36-36 36s-36-16.118-36-36 16.118-36 36-36 36 16.118 36 36zm0 96c0 19.882-16.118 36-36 36s-36-16.118-36-36 16.118-36 36-36 36 16.118 36 36zm0 96c0 19.882-16.118 36-36 36s-36-16.118-36-36 16.118-36 36-36 36 16.118 36 36z"/></svg></div>
<div class="c" style="left:65.5px">Antrag auf Akteneinsicht - WW</div>
<div class="c" style="right:863.5px;letter-spacing:-0.55px">30.03.2022</div>
<div class="c" style="left:436px">Boder Birgit</div>
<div class="ico" style="left:597.20px;top:8px"><svg width="14.00" height="16" viewBox="0 0 448 512" style="display:block"><path fill="#e74c3c" d="M400 64h-48V12c0-6.627-5.373-12-12-12h-40c-6.627 0-12 5.373-12 12v52H160V12c0-6.627-5.373-12-12-12h-40c-6.627 0-12 5.373-12 12v52H48C21.49 64 0 85.49 0 112v352c0 26.51 21.49 48 48 48h352c26.51 0 48-21.49 48-48V112c0-26.51-21.49-48-48-48zm-6 400H54a6 6 0 0 1-6-6V160h352v298a6 6 0 0 1-6 6zm-52.849-200.65L198.842 404.519c-4.705 4.667-12.303 4.637-16.971-.068l-75.091-75.699c-4.667-4.705-4.637-12.303.068-16.971l22.719-22.536c4.705-4.667 12.303-4.637 16.970.069l44.104 44.461 111.072-110.181c4.705-4.667 12.303-4.637 16.971.068l22.536 22.718c4.667 4.705 4.636 12.303-.069 16.97z"/></svg></div>
<div class="c" style="left:620px">Antrag vollständig ausgefüllt</div>
<div class="c" style="left:895px;font-weight:700;letter-spacing:-0.4px">VG</div>
<div class="c" style="left:927px;letter-spacing:-0.25px">Blom Bertalan</div>
<div class="ico" style="left:1206.5px;top:8px"><svg width="16.00" height="16" viewBox="0 0 512 512" style="display:block"><path fill="#0d6efd" d="M505 442.7L405.3 343c-4.5-4.5-10.6-7-17-7H372c27.6-35.3 44-79.7 44-128C416 93.1 322.9 0 208 0S0 93.1 0 208s93.1 208 208 208c48.3 0 92.7-16.4 128-44v16.3c0 6.4 2.5 12.5 7 17l99.7 99.7c9.4 9.4 24.6 9.4 33.9 0l28.3-28.3c9.4-9.4 9.4-24.6.1-34zM208 336c-70.7 0-128-57.2-128-128 0-70.7 57.2-128 128-128 70.7 0 128 57.2 128 128 0 70.7-57.2 128-128 128z"/></svg></div>
<div class="ico" style="left:1226.8px;top:8px"><svg width="14.00" height="16" viewBox="0 0 448 512" style="display:block"><path fill="#0d6efd" d="M32 464a48 48 0 0 0 48 48h288a48 48 0 0 0 48-48V128H32zm272-256a16 16 0 0 1 32 0v224a16 16 0 0 1-32 0zm-96 0a16 16 0 0 1 32 0v224a16 16 0 0 1-32 0zm-96 0a16 16 0 0 1 32 0v224a16 16 0 0 1-32 0zM432 32H312l-9.4-18.7A24 24 0 0 0 281.1 0H166.8a23.72 23.72 0 0 0-21.4 13.3L136 32H16A16 16 0 0 0 0 48v32a16 16 0 0 0 16 16h416a16 16 0 0 0 16-16V48a16 16 0 0 0-16-16z"/></svg></div>
<div class="ico" style="left:1247.2px;top:8px"><svg width="18.00" height="16" viewBox="0 0 576 512" style="display:block"><path fill="#0d6efd" d="M96,128A64,64,0,1,0,32,64,64,64,0,0,0,96,128Zm0,176.08a44.11,44.11,0,0,1,13.64-32L181.77,204c1.65-1.55,3.77-2.31,5.61-3.57A63.91,63.91,0,0,0,128,160H64A64,64,0,0,0,0,224v96a32,32,0,0,0,32,32V480a32,32,0,0,0,32,32h64a32,32,0,0,0,32-32V383.61l-50.36-47.53A44.08,44.08,0,0,1,96,304.08ZM480,128a64,64,0,1,0-64-64A64,64,0,0,0,480,128Zm32,32H448a63.91,63.91,0,0,0-59.38,40.42c1.84,1.27,4,2,5.62,3.59l72.12,68.06a44.37,44.37,0,0,1,0,64L416,383.62V480a32,32,0,0,0,32,32h64a32,32,0,0,0,32-32V352a32,32,0,0,0,32-32V224A64,64,0,0,0,512,160ZM444.4,295.34l-72.12-68.06A12,12,0,0,0,352,236v36H224V236a12,12,0,0,0-20.28-8.73L131.6,295.34a12.4,12.4,0,0,0,0,17.47l72.12,68.07A12,12,0,0,0,224,372V336H352v36a12,12,0,0,0,20.28,8.72l72.12-68.07A12.4,12.4,0,0,0,444.4,295.34Z"/></svg></div>
<div class="ico" style="left:1269px;top:8px"><svg width="16.00" height="16" viewBox="0 0 512 512" style="display:block"><path fill="#0d6efd" d="M370.72 133.28C339.458 104.008 298.888 87.962 255.848 88c-77.458.068-144.328 53.178-162.791 126.85-1.344 5.363-6.122 9.15-11.651 9.15H24.103c-7.498 0-13.194-6.807-11.807-14.176C33.933 94.924 134.813 8 256 8c66.448 0 126.791 26.136 171.315 68.685L463.03 40.97C478.149 25.851 504 36.559 504 57.941V192c0 13.255-10.745 24-24 24H345.941c-21.382 0-32.090-25.851-16.971-40.971l41.75-41.749zM32 296h134.059c21.382 0 32.09 25.851 16.971 40.971l-41.75 41.75c31.262 29.273 71.835 45.319 114.876 45.28 77.418-.07 144.315-53.144 162.787-126.849 1.344-5.363 6.122-9.15 11.651-9.150h57.304c7.498 0 13.194 6.807 11.807 14.176C478.067 417.076 377.187 504 256 504c-66.448 0-126.791-26.136-171.315-68.685L48.97 471.03C33.851 486.149 8 475.441 8 454.059V320c0-13.255 10.745-24 24-24z"/></svg></div>
</div>
<div class="row" style="top:541px">
<div class="c" style="left:4px">124</div>
<div class="ico" style="left:39.30px;top:8px"><svg width="20.00" height="16" viewBox="0 0 640 512" style="display:block"><path fill="#f1c40f" d="M320 144c-53.02 0-96 50.14-96 112 0 61.85 42.98 112 96 112 53 0 96-50.13 96-112 0-61.86-42.98-112-96-112zm40 168c0 4.42-3.58 8-8 8h-64c-4.42 0-8-3.58-8-8v-16c0-4.42 3.58-8 8-8h16v-55.44l-.47.31a7.992 7.992 0 0 1-11.09-2.22l-8.88-13.31a7.992 7.992 0 0 1 2.22-11.09l15.33-10.22a23.99 23.99 0 0 1 13.31-4.030H328c4.42 0 8 3.58 8 8v88h16c4.42 0 8 3.58 8 8v16zM608 64H32C14.33 64 0 78.33 0 96v320c0 17.67 14.33 32 32 32h576c17.67 0 32-14.33 32-32V96c0-17.67-14.33-32-32-32zm-16 272c-35.35 0-64 28.65-64 64H112c0-35.35-28.65-64-64-64V176c35.35 0 64-28.65 64-64h416c0 35.35 28.65 64 64 64v160z"/></svg></div>
<div class="c" style="left:65.5px">Antrag 13.ML als Ferien</div>
<div class="c" style="right:863.5px;letter-spacing:-0.55px">30.03.2022</div>
<div class="c" style="left:436px">Lüdi Marie</div>
<div class="ico" style="left:594.20px;top:8px"><svg width="20.00" height="16" viewBox="0 0 640 512" style="display:block"><path fill="#3498db" d="M320 144c-53.02 0-96 50.14-96 112 0 61.85 42.98 112 96 112 53 0 96-50.13 96-112 0-61.86-42.98-112-96-112zm40 168c0 4.42-3.58 8-8 8h-64c-4.42 0-8-3.58-8-8v-16c0-4.42 3.58-8 8-8h16v-55.44l-.47.31a7.992 7.992 0 0 1-11.09-2.22l-8.88-13.31a7.992 7.992 0 0 1 2.22-11.09l15.33-10.22a23.99 23.99 0 0 1 13.31-4.030H328c4.42 0 8 3.58 8 8v88h16c4.42 0 8 3.58 8 8v16zM608 64H32C14.33 64 0 78.33 0 96v320c0 17.67 14.33 32 32 32h576c17.67 0 32-14.33 32-32V96c0-17.67-14.33-32-32-32zm-16 272c-35.35 0-64 28.65-64 64H112c0-35.35-28.65-64-64-64V176c35.35 0 64-28.65 64-64h416c0 35.35 28.65 64 64 64v160z"/></svg></div>
<div class="c" style="left:620px">Kürzen 13.ML im Lohnsystem</div>
<div class="c" style="left:895px;font-weight:700;letter-spacing:-0.4px">HR</div>
<div class="c" style="left:927.5px;letter-spacing:-0.25px">Hürlimann Elisabeth</div>
<div class="c" style="right:97px;letter-spacing:-0.55px">02.04.2022</div>
<div class="ico" style="left:1206.5px;top:8px"><svg width="16.00" height="16" viewBox="0 0 512 512" style="display:block"><path fill="#0d6efd" d="M505 442.7L405.3 343c-4.5-4.5-10.6-7-17-7H372c27.6-35.3 44-79.7 44-128C416 93.1 322.9 0 208 0S0 93.1 0 208s93.1 208 208 208c48.3 0 92.7-16.4 128-44v16.3c0 6.4 2.5 12.5 7 17l99.7 99.7c9.4 9.4 24.6 9.4 33.9 0l28.3-28.3c9.4-9.4 9.4-24.6.1-34zM208 336c-70.7 0-128-57.2-128-128 0-70.7 57.2-128 128-128 70.7 0 128 57.2 128 128 0 70.7-57.2 128-128 128z"/></svg></div>
<div class="ico" style="left:1226.8px;top:8px"><svg width="14.00" height="16" viewBox="0 0 448 512" style="display:block"><path fill="#0d6efd" d="M32 464a48 48 0 0 0 48 48h288a48 48 0 0 0 48-48V128H32zm272-256a16 16 0 0 1 32 0v224a16 16 0 0 1-32 0zm-96 0a16 16 0 0 1 32 0v224a16 16 0 0 1-32 0zm-96 0a16 16 0 0 1 32 0v224a16 16 0 0 1-32 0zM432 32H312l-9.4-18.7A24 24 0 0 0 281.1 0H166.8a23.72 23.72 0 0 0-21.4 13.3L136 32H16A16 16 0 0 0 0 48v32a16 16 0 0 0 16 16h416a16 16 0 0 0 16-16V48a16 16 0 0 0-16-16z"/></svg></div>
<div class="ico" style="left:1247.2px;top:8px"><svg width="18.00" height="16" viewBox="0 0 576 512" style="display:block"><path fill="#0d6efd" d="M96,128A64,64,0,1,0,32,64,64,64,0,0,0,96,128Zm0,176.08a44.11,44.11,0,0,1,13.64-32L181.77,204c1.65-1.55,3.77-2.31,5.61-3.57A63.91,63.91,0,0,0,128,160H64A64,64,0,0,0,0,224v96a32,32,0,0,0,32,32V480a32,32,0,0,0,32,32h64a32,32,0,0,0,32-32V383.61l-50.36-47.53A44.08,44.08,0,0,1,96,304.08ZM480,128a64,64,0,1,0-64-64A64,64,0,0,0,480,128Zm32,32H448a63.91,63.91,0,0,0-59.38,40.42c1.84,1.27,4,2,5.62,3.59l72.12,68.06a44.37,44.37,0,0,1,0,64L416,383.62V480a32,32,0,0,0,32,32h64a32,32,0,0,0,32-32V352a32,32,0,0,0,32-32V224A64,64,0,0,0,512,160ZM444.4,295.34l-72.12-68.06A12,12,0,0,0,352,236v36H224V236a12,12,0,0,0-20.28-8.73L131.6,295.34a12.4,12.4,0,0,0,0,17.47l72.12,68.07A12,12,0,0,0,224,372V336H352v36a12,12,0,0,0,20.28,8.72l72.12-68.07A12.4,12.4,0,0,0,444.4,295.34Z"/></svg></div>
<div class="ico" style="left:1269px;top:8px"><svg width="16.00" height="16" viewBox="0 0 512 512" style="display:block"><path fill="#0d6efd" d="M370.72 133.28C339.458 104.008 298.888 87.962 255.848 88c-77.458.068-144.328 53.178-162.791 126.85-1.344 5.363-6.122 9.15-11.651 9.15H24.103c-7.498 0-13.194-6.807-11.807-14.176C33.933 94.924 134.813 8 256 8c66.448 0 126.791 26.136 171.315 68.685L463.03 40.97C478.149 25.851 504 36.559 504 57.941V192c0 13.255-10.745 24-24 24H345.941c-21.382 0-32.090-25.851-16.971-40.971l41.75-41.749zM32 296h134.059c21.382 0 32.09 25.851 16.971 40.971l-41.75 41.75c31.262 29.273 71.835 45.319 114.876 45.28 77.418-.07 144.315-53.144 162.787-126.849 1.344-5.363 6.122-9.15 11.651-9.150h57.304c7.498 0 13.194 6.807 11.807 14.176C478.067 417.076 377.187 504 256 504c-66.448 0-126.791-26.136-171.315-68.685L48.97 471.03C33.851 486.149 8 475.441 8 454.059V320c0-13.255 10.745-24 24-24z"/></svg></div>
</div>
<div class="row s" style="top:574px">
<div class="c" style="left:4px">111</div>
<div class="ico" style="left:42.30px;top:8px"><svg width="14.00" height="16" viewBox="0 0 448 512" style="display:block"><path fill="#d35400" d="M436 160c6.6 0 12-5.4 12-12v-40c0-6.6-5.4-12-12-12h-20V48c0-26.5-21.5-48-48-48H48C21.5 0 0 21.5 0 48v416c0 26.5 21.5 48 48 48h320c26.5 0 48-21.5 48-48v-48h20c6.6 0 12-5.4 12-12v-40c0-6.6-5.4-12-12-12h-20v-64h20c6.6 0 12-5.4 12-12v-40c0-6.6-5.4-12-12-12h-20v-64h20zm-68 304H48V48h320v416zM208 256c35.3 0 64-28.7 64-64s-28.7-64-64-64-64 28.7-64 64 28.7 64 64 64zm-89.6 128h179.2c12.4 0 22.4-8.6 22.4-19.2v-19.2c0-31.8-30.1-57.6-67.2-57.6-10.8 0-18.7 8-44.8 8-26.9 0-33.4-8-44.8-8-37.1 0-67.2 25.8-67.2 57.6v19.2c0 10.6 10 19.2 22.4 19.2z"/></svg></div>
<div class="c" style="left:65.5px">PERSONALEINTRITT WW</div>
<div class="c" style="right:863.5px;letter-spacing:-0.55px">11.03.2022</div>
<div class="c" style="left:436px">Dietler Diego</div>
<div class="ico" style="left:595.20px;top:8px"><svg width="18.00" height="16" viewBox="0 0 576 512" style="display:block"><path fill="#52be80" d="M528 32H48C21.5 32 0 53.5 0 80v352c0 26.5 21.5 48 48 48h480c26.5 0 48-21.5 48-48V80c0-26.5-21.5-48-48-48zm0 400H48V80h480v352zM208 256c35.3 0 64-28.7 64-64s-28.7-64-64-64-64 28.7-64 64 28.7 64 64 64zm-89.6 128h179.2c12.4 0 22.4-8.6 22.4-19.2v-19.2c0-31.8-30.1-57.6-67.2-57.6-10.8 0-18.7 8-44.8 8-26.9 0-33.4-8-44.8-8-37.1 0-67.2 25.8-67.2 57.6v19.2c0 10.6 10 19.2 22.4 19.2zM360 320h112c4.4 0 8-3.6 8-8v-16c0-4.4-3.6-8-8-8H360c-4.4 0-8 3.6-8 8v16c0 4.4 3.6 8 8 8zm0-64h112c4.4 0 8-3.6 8-8v-16c0-4.4-3.6-8-8-8H360c-4.4 0-8 3.6-8 8v16c0 4.4 3.6 8 8 8zm0-64h112c4.4 0 8-3.6 8-8v-16c0-4.4-3.6-8-8-8H360c-4.4 0-8 3.6-8 8v16c0 4.4 3.6 8 8 8z"/></svg></div>
<div class="c" style="left:620px">Formular "Personaleintritt" ausgef...</div>
<div class="ico" style="left:1249.2px;top:8px"><svg width="16.00" height="16" viewBox="0 0 512 512" style="display:block"><path fill="#0d6efd" d="M505 442.7L405.3 343c-4.5-4.5-10.6-7-17-7H372c27.6-35.3 44-79.7 44-128C416 93.1 322.9 0 208 0S0 93.1 0 208s93.1 208 208 208c48.3 0 92.7-16.4 128-44v16.3c0 6.4 2.5 12.5 7 17l99.7 99.7c9.4 9.4 24.6 9.4 33.9 0l28.3-28.3c9.4-9.4 9.4-24.6.1-34zM208 336c-70.7 0-128-57.2-128-128 0-70.7 57.2-128 128-128 70.7 0 128 57.2 128 128 0 70.7-57.2 128-128 128z"/></svg></div>
<div class="ico" style="left:1269.8px;top:8px"><svg width="14.00" height="16" viewBox="0 0 448 512" style="display:block"><path fill="#0d6efd" d="M32 464a48 48 0 0 0 48 48h288a48 48 0 0 0 48-48V128H32zm272-256a16 16 0 0 1 32 0v224a16 16 0 0 1-32 0zm-96 0a16 16 0 0 1 32 0v224a16 16 0 0 1-32 0zm-96 0a16 16 0 0 1 32 0v224a16 16 0 0 1-32 0zM432 32H312l-9.4-18.7A24 24 0 0 0 281.1 0H166.8a23.72 23.72 0 0 0-21.4 13.3L136 32H16A16 16 0 0 0 0 48v32a16 16 0 0 0 16 16h416a16 16 0 0 0 16-16V48a16 16 0 0 0-16-16z"/></svg></div>
</div>
<div class="row" style="top:607px">
<div class="c" style="left:4px">100</div>
<div class="ico" style="left:41.30px;top:8px"><svg width="16.00" height="16" viewBox="0 0 512 512" style="display:block"><path fill="#884ea0" d="M461.2 128H80c-8.84 0-16-7.16-16-16s7.16-16 16-16h384c8.84 0 16-7.16 16-16 0-26.51-21.49-48-48-48H64C28.65 32 0 60.65 0 96v320c0 35.35 28.65 64 64 64h397.2c28.020 0 50.8-21.53 50.8-48V176c0-26.47-22.78-48-50.8-48zM416 336c-17.67 0-32-14.33-32-32s14.33-32 32-32 32 14.33 32 32-14.33 32-32 32z"/></svg></div>
<div class="c" style="left:65.5px">Beschaffungsantrag1</div>
<div class="c" style="right:863.5px;letter-spacing:-0.55px">08.03.2022</div>
<div class="c" style="left:436px">Dietler Diego</div>
<div class="ico" style="left:596.20px;top:8px"><svg width="16.00" height="16" viewBox="0 0 512 512" style="display:block"><path fill="#1d6b3a" d="M256 8C119.033 8 8 119.033 8 256s111.033 248 248 248 248-111.033 248-248S392.967 8 256 8zm0 48c110.532 0 200 89.451 200 200 0 110.532-89.451 200-200 200-110.532 0-200-89.451-200-200 0-110.532 89.451-200 200-200m140.204 130.267l-22.536-22.718c-4.667-4.705-12.265-4.736-16.970-.068L215.346 303.697l-59.792-60.277c-4.667-4.705-12.265-4.736-16.97-.069l-22.719 22.536c-4.705 4.667-4.736 12.265-.068 16.971l90.781 91.516c4.667 4.705 12.265 4.736 16.97.068l172.589-171.204c4.704-4.668 4.734-12.266.067-16.971z"/></svg></div>
<div class="c" style="left:620px">Antrag wurde mit geänderten Ko...</div>
<div class="ico" style="left:1249.2px;top:8px"><svg width="16.00" height="16" viewBox="0 0 512 512" style="display:block"><path fill="#0d6efd" d="M505 442.7L405.3 343c-4.5-4.5-10.6-7-17-7H372c27.6-35.3 44-79.7 44-128C416 93.1 322.9 0 208 0S0 93.1 0 208s93.1 208 208 208c48.3 0 92.7-16.4 128-44v16.3c0 6.4 2.5 12.5 7 17l99.7 99.7c9.4 9.4 24.6 9.4 33.9 0l28.3-28.3c9.4-9.4 9.4-24.6.1-34zM208 336c-70.7 0-128-57.2-128-128 0-70.7 57.2-128 128-128 70.7 0 128 57.2 128 128 0 70.7-57.2 128-128 128z"/></svg></div>
<div class="ico" style="left:1269.8px;top:8px"><svg width="14.00" height="16" viewBox="0 0 448 512" style="display:block"><path fill="#0d6efd" d="M32 464a48 48 0 0 0 48 48h288a48 48 0 0 0 48-48V128H32zm272-256a16 16 0 0 1 32 0v224a16 16 0 0 1-32 0zm-96 0a16 16 0 0 1 32 0v224a16 16 0 0 1-32 0zm-96 0a16 16 0 0 1 32 0v224a16 16 0 0 1-32 0zM432 32H312l-9.4-18.7A24 24 0 0 0 281.1 0H166.8a23.72 23.72 0 0 0-21.4 13.3L136 32H16A16 16 0 0 0 0 48v32a16 16 0 0 0 16 16h416a16 16 0 0 0 16-16V48a16 16 0 0 0-16-16z"/></svg></div>
</div>
<div class="a" style="left:37.5px;top:674px;line-height:24px;color:#6c757d;letter-spacing:-0.35px">Fälle pro Seite:</div>
<div class="a" style="left:145.5px;top:671px;width:41px;height:24px;border:1px solid #b8bcc0;border-radius:3px;background:#fff"><span style="position:absolute;left:4px;top:3px;line-height:22px;font-size:16px;color:#111;letter-spacing:-0.6px">10</span><svg style="position:absolute;left:26px;top:7px" width="10" height="8" viewBox="0 0 10 8"><path d="M1.5 2 L5 5.5 L8.5 2" fill="none" stroke="#111" stroke-width="2"/></svg></div>
<div class="pg" style="left:561px;width:26px;background:#0d6efd;border-color:#0d6efd;color:#fff;border-radius:4px 0 0 4px;z-index:2;">1</div>
<div class="pg" style="left:586px;width:25px;">2</div>
<div class="pg" style="left:610px;width:26px;">3</div>
<div class="pg" style="left:635px;width:27px;font-size:12px;">...</div>
<div class="pg" style="left:661px;width:28px;">></div>
<div class="pg" style="left:688px;width:37px;border-radius:0 4px 4px 0;letter-spacing:5.5px;padding-left:9px;">>></div>
<div class="a" style="right:50.5px;top:673px;line-height:24px;color:#6c757d;letter-spacing:-0.2px">10 Fälle von 32 auf 4 Seiten</div>
<div class="card" style="left:27px;width:414px"><div class="ch">Anzahl Fälle</div></div>
<div class="card" style="left:465px;width:852.5px"><div class="ch">Gestartete Fälle</div></div>
<svg class="a" style="left:0;top:0;pointer-events:none" width="1343" height="1186" viewBox="0 0 1343 1186" font-family="Liberation Sans, sans-serif">
<text x="233.6" y="824" text-anchor="middle" font-size="12" font-weight="700" fill="#666">Anzahl Fälle (inkl. abgeschlossene)</text>
<text x="890.8" y="824" text-anchor="middle" font-size="12" font-weight="700" fill="#666">Anzahl neuer Fälle</text>
<rect x="90.20" y="848.3" width="38" height="10" fill="#aed6f1"/>
<text x="135.20" y="856.9" font-size="12" fill="#666" xml:space="preserve">Antrag neuer PC</text>
<rect x="235.60" y="848.3" width="38" height="10" fill="#cb4335"/>
<text x="280.60" y="856.9" font-size="12" fill="#666" xml:space="preserve">Antrag Office Kurs</text>
<rect x="69.50" y="870.3" width="38" height="10" fill="#5499c7"/>
<text x="114.50" y="878.9" font-size="12" fill="#666" xml:space="preserve">Aufgabe für Mitarbeiter</text>
<rect x="247.60" y="870.3" width="38" height="10" fill="#884ea0"/>
<text x="292.60" y="878.9" font-size="12" fill="#666" xml:space="preserve">Beschaffungsantrag</text>
<rect x="105.50" y="892.3" width="38" height="10" fill="#48c9b0"/>
<text x="150.50" y="900.9" font-size="12" fill="#666" xml:space="preserve">CSI - Abrechnung Weiterbildungskosten</text>
<rect x="121.75" y="914.3" width="38" height="10" fill="#af7ac5"/>
<text x="166.75" y="922.9" font-size="12" fill="#666" xml:space="preserve">MWO -&#160; Erstellung Kundenvertrag</text>
<rect x="139.25" y="936.3" width="38" height="10" fill="#d35400"/>
<text x="184.25" y="944.9" font-size="12" fill="#666" xml:space="preserve">PERSONALEINTRITT WW</text>
<rect x="138.75" y="958.3" width="38" height="10" fill="#f39c12"/>
<text x="183.75" y="966.9" font-size="12" fill="#666" xml:space="preserve">WW - Antrag unbez. Urlaub</text>
<rect x="525.10" y="845.9" width="43" height="15" fill="#2ecc71"/>
<text x="572.60" y="857.0" font-size="12" fill="#666" xml:space="preserve">Anfrage an HR</text>
<rect x="661.00" y="845.9" width="43" height="15" fill="#f1c40f"/>
<text x="708.50" y="857.0" font-size="12" fill="#666" xml:space="preserve">Antrag 13.ML als Ferien</text>
<rect x="845.10" y="845.9" width="43" height="15" fill="#f0b27a"/>
<text x="892.60" y="857.0" font-size="12" fill="#666" xml:space="preserve">Antrag auf Akteneinsicht - WW</text>
<rect x="1064.30" y="845.9" width="43" height="15" fill="#6c3483"/>
<text x="1111.80" y="857.0" font-size="12" fill="#666" xml:space="preserve">Antrag Mutterschaftsurlaub</text>
<rect x="574.10" y="867.9" width="43" height="15" fill="#aed6f1"/>
<text x="621.60" y="879.0" font-size="12" fill="#666" xml:space="preserve">Antrag neuer PC</text>
<rect x="720.00" y="867.9" width="43" height="15" fill="#cb4335"/>
<text x="767.50" y="879.0" font-size="12" fill="#666" xml:space="preserve">Antrag Office Kurs</text>
<rect x="874.30" y="867.9" width="43" height="15" fill="#5499c7"/>
<text x="921.80" y="879.0" font-size="12" fill="#666" xml:space="preserve">Aufgabe für Mitarbeiter</text>
<rect x="1052.90" y="867.9" width="43" height="15" fill="#884ea0"/>
<text x="1100.40" y="879.0" font-size="12" fill="#666" xml:space="preserve">Beschaffungsantrag</text>
<rect x="536.50" y="889.9" width="43" height="15" fill="#48c9b0"/>
<text x="584.00" y="901.0" font-size="12" fill="#666" xml:space="preserve">CSI - Abrechnung Weiterbildungskosten</text>
<rect x="805.60" y="889.9" width="43" height="15" fill="#85c1e9"/>
<text x="853.10" y="901.0" font-size="12" fill="#666" xml:space="preserve">Gesuch Nebenbeschäftigung</text>
<rect x="1016.90" y="889.9" width="43" height="15" fill="#af7ac5"/>
<text x="1064.40" y="901.0" font-size="12" fill="#666" xml:space="preserve">MWO -&#160; Erstellung Kundenvertrag</text>
<rect x="592.95" y="911.9" width="43" height="15" fill="#d35400"/>
<text x="640.45" y="923.0" font-size="12" fill="#666" xml:space="preserve">PERSONALEINTRITT WW</text>
<rect x="794.55" y="911.9" width="43" height="15" fill="#76d7c4"/>
<text x="842.05" y="923.0" font-size="12" fill="#666" xml:space="preserve">Vertragsverlängerung (HR)</text>
<rect x="994.45" y="911.9" width="43" height="15" fill="#f39c12"/>
<text x="1041.95" y="923.0" font-size="12" fill="#666" xml:space="preserve">WW - Antrag unbez. Urlaub</text>
<path d="M233.70 980.10A86 86 0 0 1 290.73 1001.73L262.21 1033.91A43 43 0 0 0 233.70 1023.10Z" fill="#aed6f1" stroke="#fff" stroke-width="2" stroke-linejoin="bevel"/>
<path d="M290.73 1001.73A86 86 0 0 1 304.48 1017.25L269.09 1041.67A43 43 0 0 0 262.21 1033.91Z" fill="#cb4335" stroke="#fff" stroke-width="2" stroke-linejoin="bevel"/>
<path d="M304.48 1017.25A86 86 0 0 1 314.11 1035.60L273.91 1050.85A43 43 0 0 0 269.09 1041.67Z" fill="#5499c7" stroke="#fff" stroke-width="2" stroke-linejoin="bevel"/>
<path d="M314.11 1035.60A86 86 0 0 1 176.67 1130.47L205.19 1098.29A43 43 0 0 0 273.91 1050.85Z" fill="#884ea0" stroke="#fff" stroke-width="2" stroke-linejoin="bevel"/>
<path d="M176.67 1130.47A86 86 0 0 1 153.29 1096.60L193.49 1081.35A43 43 0 0 0 205.19 1098.29Z" fill="#48c9b0" stroke="#fff" stroke-width="2" stroke-linejoin="bevel"/>
<path d="M153.29 1096.60A86 86 0 0 1 148.33 1055.73L191.01 1060.92A43 43 0 0 0 193.49 1081.35Z" fill="#af7ac5" stroke="#fff" stroke-width="2" stroke-linejoin="bevel"/>
<path d="M148.33 1055.73A86 86 0 0 1 162.92 1017.25L198.31 1041.67A43 43 0 0 0 191.01 1060.92Z" fill="#d35400" stroke="#fff" stroke-width="2" stroke-linejoin="bevel"/>
<path d="M162.92 1017.25A86 86 0 0 1 233.70 980.10L233.70 1023.10A43 43 0 0 0 198.31 1041.67Z" fill="#f39c12" stroke="#fff" stroke-width="2" stroke-linejoin="bevel"/>
<line x1="502.5" y1="1124.5" x2="1272.5" y2="1124.5" stroke="#e6e6e6" stroke-width="1"/>
<text x="499.5" y="1127.8" text-anchor="end" font-size="12" fill="#666">0</text>
<line x1="502.5" y1="1097.5" x2="1272.5" y2="1097.5" stroke="#e6e6e6" stroke-width="1"/>
<text x="499.5" y="1100.8" text-anchor="end" font-size="12" fill="#666">1</text>
<line x1="502.5" y1="1070.5" x2="1272.5" y2="1070.5" stroke="#e6e6e6" stroke-width="1"/>
<text x="499.5" y="1073.8" text-anchor="end" font-size="12" fill="#666">2</text>
<line x1="502.5" y1="1043.5" x2="1272.5" y2="1043.5" stroke="#e6e6e6" stroke-width="1"/>
<text x="499.5" y="1046.8" text-anchor="end" font-size="12" fill="#666">3</text>
<line x1="502.5" y1="1016.5" x2="1272.5" y2="1016.5" stroke="#e6e6e6" stroke-width="1"/>
<text x="499.5" y="1019.8" text-anchor="end" font-size="12" fill="#666">4</text>
<line x1="502.5" y1="989.5" x2="1272.5" y2="989.5" stroke="#e6e6e6" stroke-width="1"/>
<text x="499.5" y="992.8" text-anchor="end" font-size="12" fill="#666">5</text>
<line x1="502.5" y1="962.5" x2="1272.5" y2="962.5" stroke="#e6e6e6" stroke-width="1"/>
<text x="499.5" y="965.8" text-anchor="end" font-size="12" fill="#666">6</text>
<line x1="502.5" y1="935.5" x2="1272.5" y2="935.5" stroke="#e6e6e6" stroke-width="1"/>
<text x="499.5" y="938.8" text-anchor="end" font-size="12" fill="#666">7</text>
<line x1="510.5" y1="935.5" x2="510.5" y2="1132.5" stroke="#d0d0d0" stroke-width="1"/>
<line x1="764.5" y1="935.5" x2="764.5" y2="1132.5" stroke="#e6e6e6" stroke-width="1"/>
<line x1="1018.5" y1="935.5" x2="1018.5" y2="1132.5" stroke="#e6e6e6" stroke-width="1"/>
<line x1="1272.5" y1="935.5" x2="1272.5" y2="1132.5" stroke="#e6e6e6" stroke-width="1"/>
<text x="510.5" y="1146" text-anchor="middle" font-size="12" fill="#666">Dez 2021</text>
<text x="764.5" y="1146" text-anchor="middle" font-size="12" fill="#666">Jan 2022</text>
<text x="1018.5" y="1146" text-anchor="middle" font-size="12" fill="#666">Feb 2022</text>
<text x="1272.5" y="1146" text-anchor="middle" font-size="12" fill="#666">Mär 2022</text>
<polyline points="764.5,1124.5 1018.5,1070.5 1272.5,1124.5" fill="none" stroke="#f39c12" stroke-width="3" stroke-linejoin="round"/>
<circle cx="764.5" cy="1124.5" r="3.6" fill="#f39c12"/>
<circle cx="1018.5" cy="1070.5" r="3.6" fill="#f39c12"/>
<circle cx="1272.5" cy="1124.5" r="3.6" fill="#f39c12"/>
<polyline points="510.5,1070.5 764.5,1124.5" fill="none" stroke="#76d7c4" stroke-width="3" stroke-linejoin="round"/>
<circle cx="510.5" cy="1070.5" r="3.6" fill="#76d7c4"/>
<circle cx="764.5" cy="1124.5" r="3.6" fill="#76d7c4"/>
<polyline points="1018.5,1124.5 1272.5,1070.5" fill="none" stroke="#d35400" stroke-width="3" stroke-linejoin="round"/>
<circle cx="1018.5" cy="1124.5" r="3.6" fill="#d35400"/>
<circle cx="1272.5" cy="1070.5" r="3.6" fill="#d35400"/>
<polyline points="510.5,1070.5 764.5,1124.5 1018.5,1124.5 1272.5,1124.5" fill="none" stroke="#48c9b0" stroke-width="3" stroke-linejoin="round"/>
<circle cx="510.5" cy="1070.5" r="3.6" fill="#48c9b0"/>
<circle cx="764.5" cy="1124.5" r="3.6" fill="#48c9b0"/>
<circle cx="1018.5" cy="1124.5" r="3.6" fill="#48c9b0"/>
<circle cx="1272.5" cy="1124.5" r="3.6" fill="#48c9b0"/>
<polyline points="764.5,1124.5 1018.5,935.5 1272.5,1016.5" fill="none" stroke="#884ea0" stroke-width="3" stroke-linejoin="round"/>
<circle cx="764.5" cy="1124.5" r="3.6" fill="#884ea0"/>
<circle cx="1018.5" cy="935.5" r="3.6" fill="#884ea0"/>
<circle cx="1272.5" cy="1016.5" r="3.6" fill="#884ea0"/>
<polyline points="510.5,1097.5 764.5,1124.5" fill="none" stroke="#cb4335" stroke-width="3" stroke-linejoin="round"/>
<circle cx="510.5" cy="1097.5" r="3.6" fill="#cb4335"/>
<circle cx="764.5" cy="1124.5" r="3.6" fill="#cb4335"/>
<polyline points="510.5,1124.5 764.5,1070.5 1018.5,1097.5 1272.5,1124.5" fill="none" stroke="#aed6f1" stroke-width="3" stroke-linejoin="round"/>
<circle cx="510.5" cy="1124.5" r="3.6" fill="#aed6f1"/>
<circle cx="764.5" cy="1070.5" r="3.6" fill="#aed6f1"/>
<circle cx="1018.5" cy="1097.5" r="3.6" fill="#aed6f1"/>
<circle cx="1272.5" cy="1124.5" r="3.6" fill="#aed6f1"/>
<polyline points="510.5,1124.5 764.5,1124.5 1018.5,1124.5 1272.5,1124.5" fill="none" stroke="#2ecc71" stroke-width="3" stroke-linejoin="round"/>
<circle cx="510.5" cy="1124.5" r="3.6" fill="#2ecc71"/>
<circle cx="764.5" cy="1124.5" r="3.6" fill="#2ecc71"/>
<circle cx="1018.5" cy="1124.5" r="3.6" fill="#2ecc71"/>
<circle cx="1272.5" cy="1124.5" r="3.6" fill="#2ecc71"/>
</svg>
</body></html>
